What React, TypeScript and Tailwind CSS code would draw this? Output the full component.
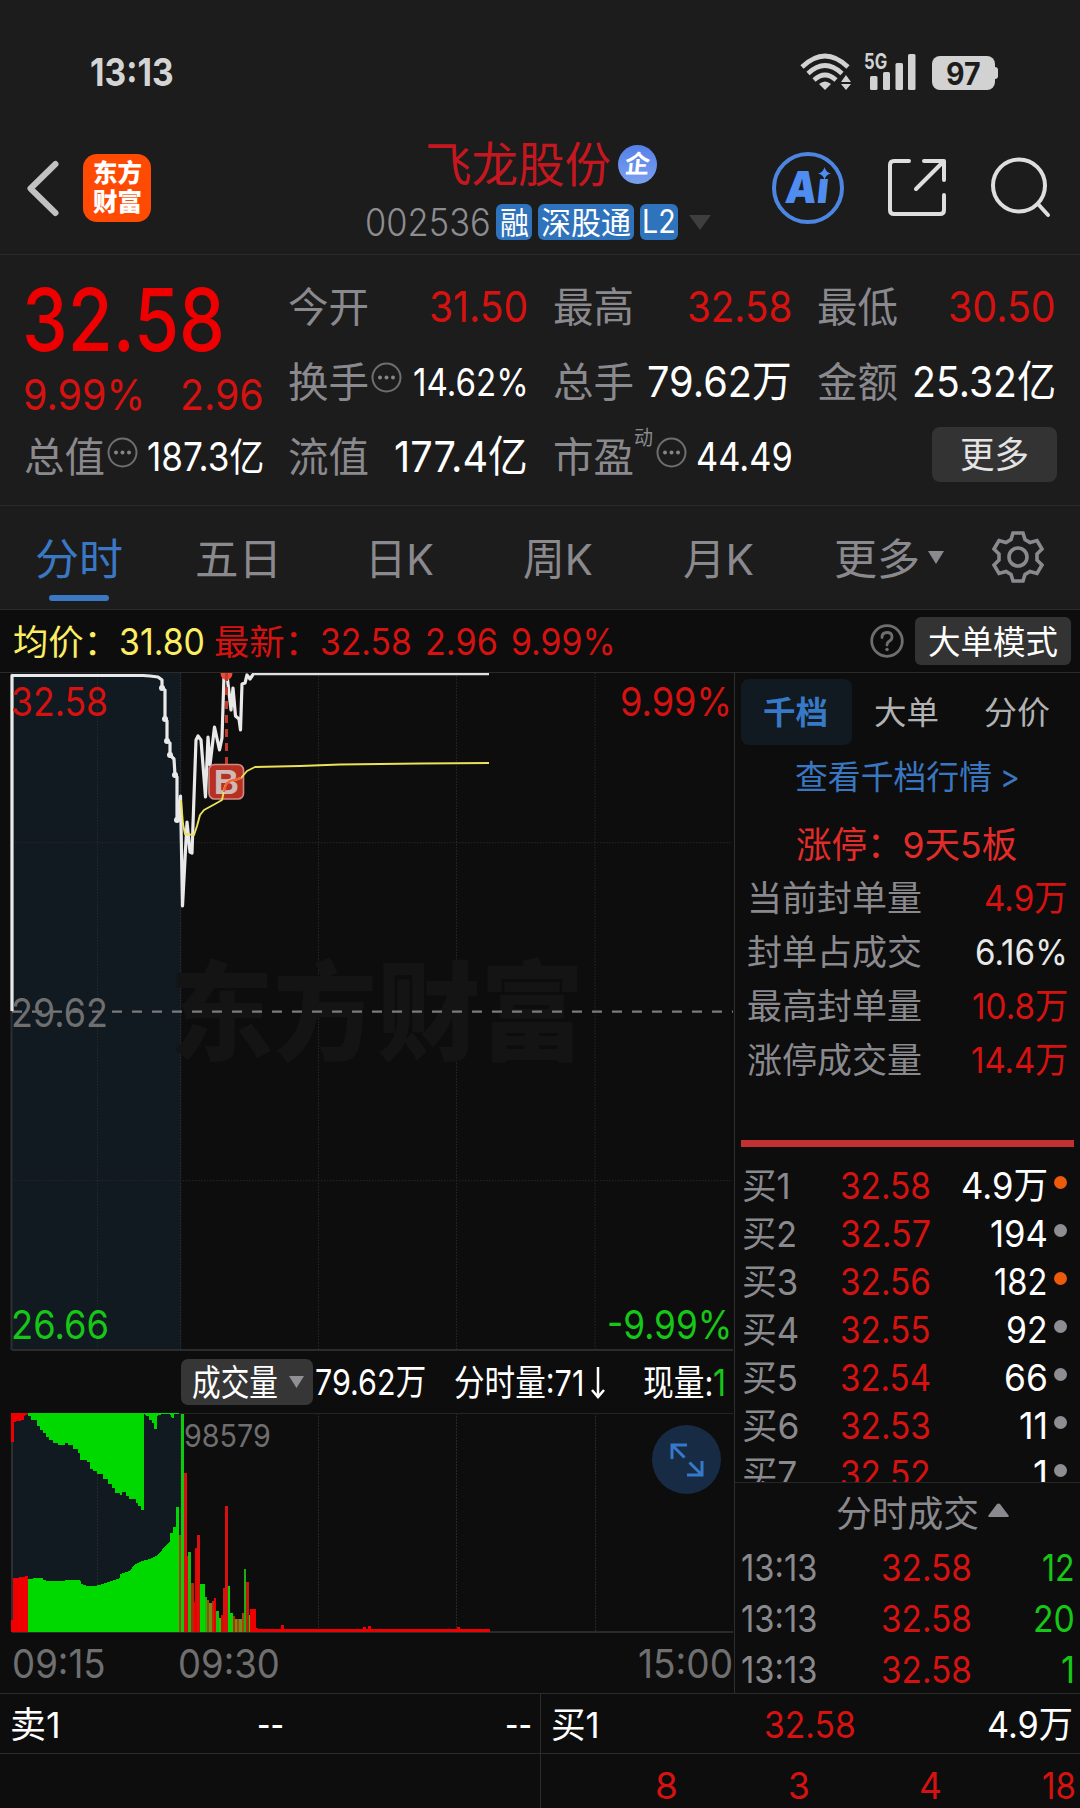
import { useLayoutEffect, useRef, type ReactNode } from "react";

/** Single-line text that is squeezed or widened to the width of its box. */
function Fit({ className = "", children }: { className?: string; children: ReactNode }) {
  const box = useRef<HTMLSpanElement>(null);
  const inner = useRef<HTMLSpanElement>(null);
  useLayoutEffect(() => {
    if (!box.current || !inner.current) return;
    const natural = inner.current.offsetWidth;
    // Ideographs sit slightly above the middle of the Latin line box.
    const nudge = /^[\u4e00-\u9fff]/.test(String(children)) ? 1.2 : 0;
    if (natural > 0) {
      inner.current.style.transform = `translateY(${nudge}px) scaleX(${box.current.clientWidth / natural})`;
    }
  }, [children]);
  return (
    <span ref={box} className={`block shrink-0 whitespace-nowrap leading-none ${className}`}>
      <span ref={inner} className="inline-block origin-left">
        {children}
      </span>
    </span>
  );
}

function Dots() {
  return (
    <svg className="-mt-2 h-[31px] w-[31px] shrink-0" viewBox="0 0 31 31" fill="none">
      <circle cx="15.5" cy="15.5" r="14" stroke="#6f6f72" strokeWidth="2" />
      <circle cx="9" cy="15.5" r="2" fill="#858589" />
      <circle cx="15.5" cy="15.5" r="2" fill="#858589" />
      <circle cx="22" cy="15.5" r="2" fill="#858589" />
    </svg>
  );
}

function StatusBar() {
  return (
    <div className="flex h-[146px] items-start pl-[90px] pr-[82px]">
      <Fit className="mt-[53px] w-[84px] text-[38px] font-bold text-[#d4d4d4]">13:13</Fit>
      <div className="ml-auto flex pt-[53px]">
        <svg className="h-[38px] w-[52px]" viewBox="0 0 52 38" fill="none" stroke="#d2d2d2" strokeWidth="4.6">
          <path d="M2 14 Q25 -8 48 14" />
          <path d="M8 20.5 Q25 4.500 42 20.500" />
          <path d="M14 27 Q25 17 36 27" />
          <path d="M19 31 Q25 26 31 31 L25 37 Z" fill="#d2d2d2" stroke="none" />
          <path d="M46 22 L51 29 H41 Z M41 31 H51 L46 37 Z" fill="#d2d2d2" stroke="none" />
        </svg>
        <div className="relative ml-[13px] h-[38px] w-[52px]">
          <Fit className="absolute -left-px top-[-2px] w-[23px] text-[21px] font-bold text-[#d2d2d2]">5G</Fit>
          <svg className="h-[38px] w-[52px]" viewBox="0 0 52 38" fill="#d2d2d2">
            <rect x="5" y="23" width="7.500" height="14" rx="1.500" />
            <rect x="18" y="19" width="7" height="18" rx="1.500" />
            <rect x="30.500" y="10" width="7.500" height="27" rx="1.500" />
            <rect x="43" y="1" width="7.500" height="36" rx="1.500" />
          </svg>
        </div>
        <div className="ml-[15px] mt-[2px] flex items-center">
          <div className="flex h-[34px] w-[63px] items-center justify-center rounded-[8px] bg-[#d2d2d2]">
            <Fit className="w-[35px] text-[31px] font-bold text-[#1c1c1c]">97</Fit>
          </div>
          <div className="h-3 w-[3px] rounded-r bg-[#d2d2d2]" />
        </div>
      </div>
    </div>
  );
}

function Header() {
  return (
    <div className="flex h-[109px] border-b border-[#2b2b2b]">
      <svg className="ml-[25px] mt-[13px] h-[60px] w-[36px]" viewBox="0 0 36 60" fill="none" stroke="#c2c2c2" strokeWidth="6" strokeLinecap="round" strokeLinejoin="round">
        <path d="M30.500 5 L5.500 29.500 L30.500 54" />
      </svg>
      <div className="ml-[22px] mt-2 flex h-[68px] w-[68px] flex-col items-center justify-center gap-[4px] rounded-[14px] bg-[#ff4a04] pb-[2px] font-black text-white">
        <Fit className="w-[49px] text-[25px]">东方</Fit>
        <Fit className="w-[49px] text-[25px]">财富</Fit>
      </div>
      <div className="ml-[214px] w-[407px]">
        <div className="-mt-[6px] flex h-[48px] items-center pl-[60px]">
          <Fit className="w-[186px] text-[48px] text-[#c5171f]">飞龙股份</Fit>
          <div className="ml-[7px] flex h-[39px] w-[39px] items-center justify-center rounded-full bg-gradient-to-b from-[#5580e8] to-[#7aa0ee]">
            <span className="-skew-x-6 text-[25px] font-bold leading-none text-white">企</span>
          </div>
        </div>
        <div className="mt-[16px] flex h-[36px] items-center">
          <Fit className="w-[126px] text-[38px] font-light text-[#8d8d91]">002536</Fit>
          <div className="ml-[5px] flex h-[36px] w-[36px] items-center justify-center rounded-[6px] bg-[#3073bd] pb-px">
            <Fit className="w-[29px] text-[31px] text-white">融</Fit>
          </div>
          <div className="ml-[6px] flex h-[36px] w-[96px] items-center justify-center rounded-[6px] bg-[#3073bd] pb-px">
            <Fit className="w-[90px] text-[31px] text-white">深股通</Fit>
          </div>
          <div className="ml-[6px] flex h-[36px] w-[38px] items-center justify-center rounded-[6px] bg-[#3073bd]">
            <Fit className="w-[34px] text-[32px] text-white">L2</Fit>
          </div>
          <svg className="ml-[11px] h-[15px] w-[22px]" viewBox="0 0 22 15">
            <path d="M0 0 H22 L11 15 Z" fill="#3e3e3e" />
          </svg>
        </div>
      </div>
      <div className="relative mt-[6px] h-[72px] w-[72px] rounded-full border-4 border-[#4c86e2]">
        <Fit className="absolute left-[10px] top-[9px] w-[43px] -skew-x-6 text-[44px] font-black text-[#4f8df0]">Aı</Fit>
        <svg className="absolute left-[42px] top-[11px] h-[13px] w-[13px]" viewBox="0 0 12 12">
          <path d="M6 0 Q7 5 12 6 Q7 7 6 12 Q5 7 0 6 Q5 5 6 0 Z" fill="#4f8df0" />
        </svg>
      </div>
      <svg className="ml-[43px] mt-[12px] h-[60px] w-[60px]" viewBox="0 0 60 60" fill="none" stroke="#dedede" strokeWidth="4" strokeLinecap="round" strokeLinejoin="round">
        <path d="M22 3 H7 Q3 3 3 7 V52 Q3 56 7 56 H53 Q57 56 57 52 V37 M37 3 H57 V22 M56 4 L29 31" />
      </svg>
      <svg className="ml-[42px] mt-[11px] h-[62px] w-[62px]" viewBox="0 0 62 62" fill="none" stroke="#dedede" strokeWidth="4" strokeLinecap="round">
        <circle cx="30" cy="28.500" r="26" />
        <path d="M49 47 L59 58" />
      </svg>
    </div>
  );
}

const ROW = "flex h-[75px] items-center";
const LABEL = "w-[81px] text-[41px] text-[#8a898e]";

function Quote() {
  return (
    <div className="grid h-[250px] grid-cols-4 gap-x-[25px] border-b border-[#2b2b2b] px-6 pt-[13px]">
      <div>
        <div className="flex h-[100px] items-center">
          <Fit className="-ml-[2px] w-[203px] text-[87px] font-medium text-[#ee0000]">32.58</Fit>
        </div>
        <div className="-ml-px flex h-[50px] items-center justify-between text-[#d61210]">
          <Fit className="w-[122px] text-[43px]">9.99%</Fit>
          <Fit className="-mr-px w-[84px] text-[43px]">2.96</Fit>
        </div>
        <div className={ROW}>
          <Fit className={LABEL}>总值</Fit>
          <div className="ml-[2px] flex"><Dots /></div>
          <Fit className="-mr-px ml-auto w-[117px] text-[39px] text-white">187.3亿</Fit>
        </div>
      </div>
      <div>
        <div className={ROW}>
          <Fit className={LABEL}>今开</Fit>
          <Fit className="ml-auto w-[99px] text-[43px] text-[#d61210]">31.50</Fit>
        </div>
        <div className={ROW}>
          <Fit className={LABEL}>换手</Fit>
          <div className="ml-[2px] flex"><Dots /></div>
          <Fit className="-mr-px ml-auto w-[116px] text-[38px] text-white">14.62%</Fit>
        </div>
        <div className={ROW}>
          <Fit className={LABEL}>流值</Fit>
          <Fit className="ml-auto w-[134px] text-[43px] text-white">177.4亿</Fit>
        </div>
      </div>
      <div>
        <div className={ROW}>
          <Fit className={LABEL}>最高</Fit>
          <Fit className="ml-auto w-[105px] text-[43px] text-[#d61210]">32.58</Fit>
        </div>
        <div className={ROW}>
          <Fit className={LABEL}>总手</Fit>
          <Fit className="ml-auto w-[145px] text-[43px] text-white">79.62万</Fit>
        </div>
        <div className={ROW}>
          <Fit className={LABEL}>市盈</Fit>
          <Fit className="-mt-[40px] w-[19px] text-[20px] text-[#8a898e]">动</Fit>
          <div className="ml-[3px] flex"><Dots /></div>
          <Fit className="-mr-px ml-auto w-[97px] text-[39px] text-white">44.49</Fit>
        </div>
      </div>
      <div>
        <div className={ROW}>
          <Fit className={LABEL}>最低</Fit>
          <Fit className="ml-auto w-[108px] text-[43px] text-[#d61210]">30.50</Fit>
        </div>
        <div className={ROW}>
          <Fit className={LABEL}>金额</Fit>
          <Fit className="ml-auto w-[144px] text-[43px] text-white">25.32亿</Fit>
        </div>
        <div className={`${ROW} justify-end`}>
          <div className="-mr-px -mt-[4px] flex h-[55px] w-[125px] items-center justify-center rounded-[8px] bg-[#333333] pb-[2px]">
            <Fit className="w-[69px] text-[36px] text-[#e4e4e4]">更多</Fit>
          </div>
        </div>
      </div>
    </div>
  );
}

function Tabs() {
  return (
    <div className="flex h-[104px] border-b border-[#2b2b2b] text-[43px] text-[#8a898e]">
      <div className="ml-[35px] flex w-[88px] flex-col items-center pt-[31px]">
        <Fit className="w-[88px] text-[#3a78c4]">分时</Fit>
        <div className="mt-[15px] h-[6px] w-[60px] rounded-full bg-[#3a78c4]" />
      </div>
      <Fit className="ml-[72px] w-[87px] pt-[31px]">五日</Fit>
      <Fit className="ml-[83px] w-[69px] pt-[31px]">日K</Fit>
      <Fit className="ml-[89px] w-[70px] pt-[31px]">周K</Fit>
      <Fit className="ml-[90px] w-[71px] pt-[31px]">月K</Fit>
      <Fit className="ml-[80px] w-[86px] pt-[31px]">更多</Fit>
      <svg className="ml-[8px] mt-[45px] h-[13px] w-[16px]" viewBox="0 0 16 13">
        <path d="M0 0 H16 L8 13 Z" fill="#8a898e" />
      </svg>
      <svg className="ml-[47px] mt-[24px] h-[54px] w-[54px]" viewBox="-27 -27 54 54" fill="none" stroke="#8a898e" strokeWidth="3.600">
        <circle r="9" />
        <path d="M-5 -24 H5 L7 -17.500 L12 -14.500 L19 -16.500 L24 -8 L19 -3 V3 L24 8 L19 16.500 L12 14.500 L7 17.500 L5 24 H-5 L-7 17.500 L-12 14.500 L-19 16.500 L-24 8 L-19 3 V-3 L-24 -8 L-19 -16.500 L-12 -14.500 L-7 -17.500 Z" />
      </svg>
    </div>
  );
}

function InfoBar() {
  return (
    <div className="flex h-[63px] items-center border-b border-[#2b2b2b] pl-[13px] pr-[9px] text-[37px] text-[#d61210]">
      <Fit className="w-[106px] text-[35px] text-[#fcee64]">均价：</Fit>
      <Fit className="w-[86px] text-[#fcee64]">31.80</Fit>
      <Fit className="ml-[9px] w-[106px] text-[35px]">最新：</Fit>
      <Fit className="w-[92px]">32.58</Fit>
      <Fit className="ml-[13px] w-[73px]">2.96</Fit>
      <Fit className="ml-[13px] w-[105px]">9.99%</Fit>
      <svg className="ml-auto h-[34px] w-[34px]" viewBox="0 0 34 34" fill="none" stroke="#6e6e6e" strokeWidth="2.800" strokeLinecap="round">
        <circle cx="17" cy="17" r="15.300" />
        <path d="M12 13.500 Q12 8.500 17 8.500 Q22 8.500 22 13 Q22 15.500 19.500 17 Q17 18.500 17 21" />
        <path d="M17 25.500 V25.600" strokeWidth="3.500" />
      </svg>
      <div className="ml-[11px] flex h-[48px] w-[156px] items-center justify-center rounded-[6px] bg-[#333333]">
        <Fit className="w-[130px] text-[33px] text-white">大单模式</Fit>
      </div>
    </div>
  );
}

const GRID_X = [97.5, 318.5, 456.5, 595];
const PRICE =
  "12,1011 12,675.5 143,675.5 150,676 158,677 162,680 162,688 165,690 165,719 167,721 167,741 170,743 170,755 174,759 175,775 177,777 177,820 179,820 180.500,796 182.500,906 187,822 190,852 192,853 196,740 198,736 201,740 205.500,797 208,737 210,765 214.500,727 219.500,750 222,738 224,675 227,675 231,710 233,688 235.500,716 239,719 240.500,730 242,684 245,683 247,675 250,679 253,674.500";
const AVERAGE =
  "181,800 183,824 185,834 194,835 197,826 200,815 204,810 215,804 222,800 225,786 228,782 241,778 247,771 255,767 300,766 340,764.500 420,763.500 489,763";
const NODES = [[162, 688], [165, 719], [167, 741], [170, 755], [175, 775], [177, 820]];

function PriceChart() {
  return (
    <div className="relative h-[678px]">
      <svg className="h-[678px] w-[734px]" viewBox="0 673 734 678" fill="none">
        <rect x="12" y="673" width="169" height="677" fill="#111921" />
        <path d="M11.500 673 V1350" stroke="#2d2f31" strokeWidth="2" />
        {GRID_X.map((x) => (
          <path key={x} d={`M${x} 673 V1350`} stroke="#26282a" strokeDasharray="1.500 1.500" />
        ))}
        <path d="M180.700 673 V1350" stroke="#2f3336" strokeDasharray="1.500 1.500" />
        <path d="M12 842.700 H732 M12 1180.700 H732" stroke="#26282a" strokeDasharray="1.500 1.500" />
        <path d="M12 1350 H733" stroke="#2c2c2c" strokeWidth="2" />
        <text x="170" y="1052" fontSize="108" fontWeight="900" fill="#141414" textLength="414" lengthAdjust="spacingAndGlyphs">东方财富</text>
        <path d="M12 1011.700 H733" stroke="#7b7b7d" strokeWidth="2.200" strokeDasharray="10 10" />
        <polyline points={PRICE} stroke="#e9e9e9" strokeWidth="3.200" strokeLinejoin="round" />
        <path d="M252 674 H489" stroke="#e0e0e0" strokeWidth="2.600" />
        {NODES.map(([x, y]) => (
          <circle key={y} cx={x} cy={y} r="3" fill="#e9e9e9" />
        ))}
        <path d="M220.500 673 A6 7 0 0 0 232.500 673 Z" fill="#ee4a36" />
        <path d="M226.500 673 V764" stroke="#bf3a2c" strokeWidth="3" strokeDasharray="8 6" />
        <rect x="209" y="764.500" width="34.500" height="34.500" rx="5.500" fill="#b83022" stroke="#cf8a84" strokeWidth="1.600" />
        <text x="226.500" y="794" textAnchor="middle" fontSize="35" fontWeight="700" fontFamily="Liberation Sans" fill="#cdb9b7">B</text>
        <polyline points={AVERAGE} stroke="#ece25a" strokeWidth="1.900" strokeLinejoin="round" />
        <path d="M224 792 L226 784 L230 781 L241 778" stroke="#f0603c" strokeWidth="2.200" />
      </svg>
      <Fit className="absolute left-[11px] top-[9px] w-[97px] text-[40px] text-[#d61210]">32.58</Fit>
      <Fit className="absolute left-[11px] top-[320px] w-[97px] text-[40px] text-[#6f6f70]">29.62</Fit>
      <Fit className="absolute left-[11px] top-[632px] w-[98px] text-[40px] text-[#17c717]">26.66</Fit>
      <Fit className="absolute right-[2px] top-[9px] w-[112px] text-[40px] text-[#d61210]">9.99%</Fit>
      <Fit className="absolute right-[2px] top-[632px] w-[125px] text-[40px] text-[#17c717]">-9.99%</Fit>
    </div>
  );
}

function VolumeBar() {
  return (
    <div className="flex h-[62px] items-center pl-[181px] text-[37px] text-white">
      <div className="flex h-[46px] w-[132px] items-center rounded-[7px] bg-[#363636] pl-[11px]">
        <Fit className="w-[86px] text-[36px]">成交量</Fit>
        <svg className="ml-[11px] h-[12px] w-[15px]" viewBox="0 0 15 12">
          <path d="M0 0 H15 L7.500 12 Z" fill="#8f8f94" />
        </svg>
      </div>
      <Fit className="ml-[2px] w-[111px] text-[36px]">79.62万</Fit>
      <Fit className="ml-[28px] w-[130px] text-[36px]">分时量:71</Fit>
      <svg className="ml-[5px] h-[34px] w-[18px]" viewBox="0 0 18 34" fill="none" stroke="#fff" strokeWidth="2.500">
        <path d="M9 2 V31 M3 25 L9 32 L15 25" />
      </svg>
      <Fit className="ml-[36px] w-[70px] text-[36px]">现量:</Fit>
      <Fit className="w-[13px] text-[#17c717]">1</Fit>
    </div>
  );
}

const RED = "#ee0000";
const GREEN = "#00d900";
const OLIVE = "#6f8f14";
const RUST = "#a3470e";
/** x, width, top, colour of each traded-volume column. */
const BARS: [number, number, number, string][] = [
  [10.5, 3, 1620, RED], [179, 2.5, 1535, RUST], [181.3, 2.8, 1414, "#0fca0f"], [184, 2.7, 1473, "#da0f0f"],
  [186.5, 1.8, 1556, RED], [188, 3.3, 1552, "#18bb12"], [191.2, 2.6, 1583, "#b32a0a"], [193.6, 1.8, 1602, RED],
  [195.2, 2, 1548, RED], [197.1, 3, 1535, "#da0f0f"], [200, 4.8, 1584, GREEN], [204.6, 2, 1597, "#20b310"],
  [206.5, 2.6, 1600, RUST], [209, 2.6, 1603, OLIVE], [211.5, 2.5, 1601, "#c62408"], [213.8, 2.2, 1598, RED],
  [215.8, 3, 1611, "#15c010"], [218.7, 2.1, 1618, GREEN], [220.7, 2.1, 1615, RED], [222.7, 2.5, 1588, "#d61210"],
  [225, 3, 1506, "#da0f0f"], [227.8, 2.3, 1586, GREEN], [230, 2.6, 1613, GREEN], [232.5, 2.5, 1616, "#cc2008"],
  [235, 2.4, 1619, OLIVE], [237.4, 1.8, 1619, RUST], [239.2, 2.3, 1619, OLIVE], [241.5, 2.2, 1613, RUST],
  [243.5, 2.8, 1568.5, "#1bae10"], [246, 3, 1582, "#c41a0a"], [248.6, 1.6, 1615, GREEN], [250, 5.5, 1608.5, RED],
  [255.4, 2.4, 1628, RED], [257, 233, 1629, RED], [280.5, 3, 1624.5, RED], [363, 3, 1627, RED],
  [367.500, 3, 1626, RED], [457, 3, 1627, RED],
];

function VolumeChart() {
  return (
    <div className="relative h-[220px]">
      <svg className="h-[220px] w-[734px]" viewBox="0 1413 734 220" fill="none" shapeRendering="crispEdges">
        <rect x="12" y="1413" width="169" height="219" fill="#111921" />
        <path d="M11.500 1413 V1632" stroke="#2d2f31" strokeWidth="2" />
        {[...GRID_X, 180.5].map((x) => (
          <path key={x} d={`M${x} 1413 V1632`} stroke="#26282a" strokeDasharray="1.500 1.500" />
        ))}
        <path d="M12 1413.500 H733" stroke="#242424" />
        <path d="M12 1632 H733" stroke="#2a2a2a" strokeWidth="2" />
        <path d="M10.500 1413 H28 V1414 L24 1416 V1420 L18 1421 L14 1422 V1441.500 H10.500 Z" fill={RED} />
        <path
          d="M28 1413 V1416 H31 V1420 H37 V1426 H40 V1430 H43 V1433 H46 V1437 H49 V1440 H53 V1443 H58 V1444.500 H65 V1443 H68 V1445 H73 V1449 H78 V1453 H80 V1460 H87 V1462 H90 V1469 H93 V1471 H97 V1474 H103 V1479 H108 V1484 H112 V1488 H115 V1493 H120 V1495 H122 V1492 H126 V1496 H129 V1499 H136 V1503 H138 V1506 H141 V1509.500 H144 V1413 Z"
          fill={GREEN}
        />
        <path d="M144 1413 V1414 L146 1416 H149 V1420 H152 V1423 H154 V1428.500 H156.500 V1416 L163 1414 H170 L172 1417.500 H174 V1414 H179 V1413 Z" fill={GREEN} />
        <path d="M13 1632 V1578.500 L28 1576 V1632 Z" fill={RED} />
        <path
          d="M28 1632 V1579 H33 V1578 H43 V1580 H46 V1581 H65 V1580 H80 V1581 H81 V1584 L86 1585.500 H97 L104 1583.500 L111 1581 L120 1578 V1574 L130 1571 L134 1565 L142 1561 L150 1559 L156 1556 L162 1550 L170 1541.500 V1533 H173 V1526.500 H176 V1507 H179 V1632 Z"
          fill={GREEN}
        />
        {BARS.map(([x, w, y, c]) => (
          <rect key={x} x={x} y={y} width={w} height={1632 - y} fill={c} />
        ))}
      </svg>
      <Fit className="absolute left-[184px] top-[7px] w-[87px] text-[31px] text-[#6f6f70]">98579</Fit>
      <div className="absolute left-[652px] top-[12px] flex h-[69px] w-[69px] items-center justify-center rounded-full bg-[#182b44]">
        <svg className="h-[34px] w-[34px]" viewBox="0 0 34 34" fill="none" stroke="#3579c8" strokeWidth="3">
          <path d="M2 16 V2 H17 M2 2 L14.500 14.500 M32 18 V32 H17 M32 32 L19.500 19.500" />
        </svg>
      </div>
    </div>
  );
}

const LIMIT_ROWS: [string, string, string][] = [
  ["当前封单量", "4.9万", "w-[84px] text-[#d61210]"],
  ["封单占成交", "6.16%", "w-[93px] text-[#e8e8e8]"],
  ["最高封单量", "10.8万", "w-[96px] text-[#d61210]"],
  ["涨停成交量", "14.4万", "w-[97px] text-[#d61210]"],
];

const BIDS: [string, string, string, string, string, boolean][] = [
  ["买1", "w-[49px]", "32.58", "4.9万", "w-[87px]", true],
  ["买2", "w-[55px]", "32.57", "194", "w-[58px]", false],
  ["买3", "w-[56px]", "32.56", "182", "w-[54px]", true],
  ["买4", "w-[57px]", "32.55", "92", "w-[42px]", false],
  ["买5", "w-[56px]", "32.54", "66", "w-[44px]", false],
  ["买6", "w-[57px]", "32.53", "11", "w-[29px]", false],
  ["买7", "w-[55px]", "32.52", "1", "w-[15px]", false],
];

const TRADES: [string, string][] = [
  ["12", "w-[33px]"],
  ["20", "w-[42px]"],
  ["1", "w-[14px]"],
];

function SidePanel() {
  return (
    <div className="h-[1020px] w-[346px] border-l border-[#2f2f2f]">
      <div className="flex h-[73px] items-center pl-[6px] pt-[5px] text-[32px] text-[#b2b2b2]">
        <div className="flex h-[66px] w-[111px] items-center justify-center rounded-[8px] bg-[#111921]">
          <Fit className="-ml-[2px] w-[65px] font-bold text-[#3779c6]">千档</Fit>
        </div>
        <Fit className="ml-[22px] w-[65px]">大单</Fit>
        <Fit className="ml-[45px] w-[66px]">分价</Fit>
      </div>
      <div className="flex h-[61px] items-center pl-[60px] text-[#3a77c0]">
        <Fit className="w-[197px] text-[33px]">查看千档行情</Fit>
        <Fit className="ml-[8px] w-[20px] text-[33px]">&gt;</Fit>
      </div>
      <div className="flex h-[73px] items-center pl-[61px] text-[#e22c29]">
        <Fit className="w-[221px] text-[36px]">涨停：9天5板</Fit>
      </div>
      <div className="-mt-[10px] text-[36px]">
        {LIMIT_ROWS.map(([label, value, cls]) => (
          <div key={label} className="flex h-[54px] items-center justify-between pl-[12px] pr-[12px] pt-px">
            <Fit className="w-[175px] text-[35px] text-[#8a898e]">{label}</Fit>
            <Fit className={cls}>{value}</Fit>
          </div>
        ))}
      </div>
      <div className="ml-[6px] mt-[54px] h-[7px] w-[333px] bg-[#c13131]" />
      <div className="h-[336px] overflow-hidden border-b border-[#262626] pt-[14px]">
        {BIDS.map(([label, labelWidth, price, amount, amountWidth, hot]) => (
          <div key={label} className="flex h-12 items-center pl-[7px] pr-[13px] text-[37px]">
            <div className="w-[98px] text-[#8a898e]">
              <Fit className={`${labelWidth} text-[36px]`}>{label}</Fit>
            </div>
            <Fit className="w-[91px] text-[#d61210]">{price}</Fit>
            <Fit className={`ml-auto text-white ${amountWidth}`}>{amount}</Fit>
            {hot ? (
              <div className="-mt-[6px] ml-[6px] h-[13px] w-[13px] rounded-full bg-[#ec5a0c]" />
            ) : (
              <div className="-mt-[6px] ml-[6px] h-[13px] w-[13px] rounded-full bg-[#8e8d92]" />
            )}
          </div>
        ))}
      </div>
      <div className="flex h-[59px] items-center pl-[101px]">
        <Fit className="w-[143px] text-[36px] text-[#8a898e]">分时成交</Fit>
        <svg className="-mt-[6px] ml-[9px] h-[14px] w-[21px]" viewBox="0 0 21 14">
          <path d="M9 1 Q10.500 0 12 1 L21 13 L20 14 H1 L0 13 Z" fill="#8a898e" />
        </svg>
      </div>
      {TRADES.map(([amount, w]) => (
        <div key={amount} className="flex h-[51px] items-center pl-[6px] pr-[5px] text-[37px]">
          <Fit className="w-[76px] text-[#8a898e]">13:13</Fit>
          <Fit className="ml-[64px] w-[91px] text-[#d61210]">32.58</Fit>
          <Fit className={`ml-auto text-[#17c717] ${w}`}>{amount}</Fit>
        </div>
      ))}
    </div>
  );
}

function Depth() {
  return (
    <div className="grid h-[115px] grid-cols-2 border-t border-[#2b2b2b] text-[37px] text-white">
      <div>
        <div className="flex h-[60px] items-center border-b border-[#2b2b2b] pl-[10px] pr-[8px] pt-px">
          <Fit className="w-[51px] text-[36px]">卖1</Fit>
          <Fit className="ml-[196px] w-[27px]">--</Fit>
          <Fit className="ml-auto w-[27px]">--</Fit>
        </div>
      </div>
      <div className="border-l border-[#2b2b2b]">
        <div className="flex h-[60px] items-center border-b border-[#2b2b2b] pl-[10px] pr-[7px] pt-px">
          <Fit className="w-[49px] text-[36px]">买1</Fit>
          <Fit className="ml-[164px] w-[92px] text-[#d61210]">32.58</Fit>
          <Fit className="ml-auto w-[86px]">4.9万</Fit>
        </div>
        <div className="flex h-[54px] items-center pl-[114px] pr-[4px] pt-[8px] text-[#d61210]">
          <Fit className="w-[23px]">8</Fit>
          <Fit className="ml-[110px] w-[22px]">3</Fit>
          <Fit className="ml-[109px] w-[23px]">4</Fit>
          <Fit className="ml-auto w-[34px]">18</Fit>
        </div>
      </div>
    </div>
  );
}

export default function App() {
  return (
    <div className="h-[1808px] w-[1080px] overflow-hidden bg-[#0d0d0d] font-['Inter','Noto_Sans_CJK_SC',sans-serif]">
      <div className="bg-[#1c1c1c]">
        <StatusBar />
        <Header />
        <div className="h-px" />
        <Quote />
        <Tabs />
      </div>
      <InfoBar />
      <div className="flex">
        <div className="w-[734px]">
          <PriceChart />
          <VolumeBar />
          <VolumeChart />
          <div className="flex h-[60px] items-center pl-[12px] text-[39px] text-[#6f6f70]">
            <Fit className="w-[94px]">09:15</Fit>
            <Fit className="ml-[72px] w-[102px]">09:30</Fit>
            <Fit className="ml-auto mr-[1px] w-[95px]">15:00</Fit>
          </div>
        </div>
        <SidePanel />
      </div>
      <Depth />
    </div>
  );
}
